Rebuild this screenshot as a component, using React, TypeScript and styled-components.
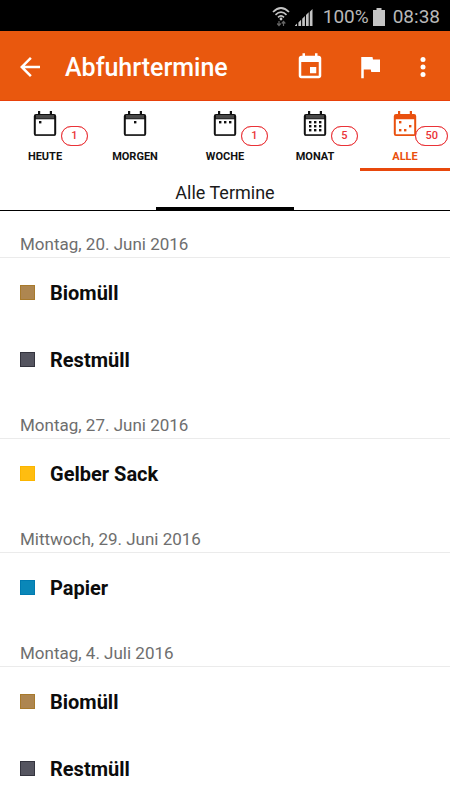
import React from "react";
import styled, { createGlobalStyle } from "styled-components";

const GlobalStyle = createGlobalStyle`
  * { box-sizing: border-box; }
  body { margin: 0; background: #fff; font-family: Roboto, "Liberation Sans", sans-serif; }
  button { font-family: inherit; border: 0; padding: 0; background: none; cursor: pointer; }
`;

const Screen = styled.div`
  height: 100vh;
  display: flex;
  flex-direction: column;
  background: #fff;
`;

const StatusBar = styled.div`
  flex: none;
  height: 31px;
  padding: 2px 10px 0;
  display: flex;
  align-items: center;
  justify-content: flex-end;
  background: #000;
  color: #b8b8b8;
  font-size: 19px;
  line-height: 29px;
`;

const SignalIcons = styled.span`
  display: flex;
  margin-right: 10px;
`;

const BatteryLevel = styled.span`
  display: flex;
  align-items: center;
  gap: 4px;
  margin-right: 8px;
`;

const AppBar = styled.header`
  flex: none;
  height: 70px;
  padding: 2px 12px 0 15px;
  display: flex;
  align-items: center;
  background: #e9580e;
  color: #fff;
  border-bottom: 1px solid #e8410a;
`;

const Actions = styled.div`
  display: flex;
  margin-right: 8px;
`;

const IconButton = styled.button<{ $width: number }>`
  width: ${(p) => p.$width}px;
  height: 48px;
  display: flex;
  align-items: center;
  justify-content: center;
  color: inherit;
`;

const Title = styled.h1`
  flex: 1;
  margin: 0 0 0 20px;
  padding-top: 2px;
  font-size: 25px;
  line-height: 32px;
  font-weight: 500;
`;

const Tabs = styled.nav`
  flex: none;
  height: 70px;
  display: grid;
  grid-template-columns: repeat(5, 1fr);
`;

const Tab = styled.button<{ $active: boolean }>`
  display: flex;
  flex-direction: column;
  align-items: center;
  padding-top: 8px;
  border-bottom: 3px solid ${(p) => (p.$active ? "#e8480c" : "transparent")};
  color: ${(p) => (p.$active ? "#e9500e" : "#111")};
`;

const TabIcon = styled.span`
  position: relative;
  display: flex;
  height: 41px;
`;

const Badge = styled.span`
  position: absolute;
  top: 17px;
  right: -29px;
  min-width: 27px;
  height: 20px;
  padding: 0 9px;
  border: 1px solid #ea3338;
  outline: 1px solid #ea333880;
  outline-offset: -1px;
  border-radius: 10px;
  background: #fff;
  color: #ea3338;
  font-size: 11px;
  line-height: 18px;
  font-weight: 500;
  text-align: center;
`;

const TabLabel = styled.span`
  font-size: 11px;
  line-height: 14px;
  font-weight: 700;
`;

const SubHeader = styled.div`
  flex: none;
  height: 40px;
  display: flex;
  justify-content: center;
  border-bottom: 1px solid #000;
`;

const SubTitle = styled.h2`
  margin: 0;
  padding: 2px 19px 0;
  border-bottom: 3px solid #000;
  color: #1a1a1a;
  font-size: 18px;
  line-height: 40px;
  font-weight: 400;
`;

const List = styled.main`
  flex: 1;
  min-height: 0;
  overflow-y: auto;
  scrollbar-width: none;
`;

const DayHeader = styled.h3`
  margin: 0;
  height: 47px;
  padding: 21px 20px 0;
  border-bottom: 1px solid #ebebeb;
  color: #6e6e6e;
  font-size: 17px;
  line-height: 24px;
  font-weight: 400;
`;

const Items = styled.ul`
  margin: 0;
  padding: 0;
  list-style: none;
`;

const Item = styled.li`
  height: 67px;
  padding: 3px 20px 0;
  display: flex;
  align-items: center;
  gap: 15px;
  color: #0c0c0c;
  font-size: 20px;
  line-height: 24px;
  font-weight: 700;
`;

const Swatch = styled.span<{ $fill: string; $edge: string }>`
  width: 15px;
  height: 15px;
  margin-bottom: 1px;
  background: ${(p) => p.$fill};
  border: 1px solid ${(p) => p.$edge};
`;

type Point = [number, number];

const CalendarIcon = ({ points, active }: { points: Point[]; active: boolean }) => (
  <svg width="28" height="30" viewBox="0 0 28 30" fill="currentColor" aria-hidden="true">
    <path
      fillRule="evenodd"
      d="M7 2h2.200v3h9.600V2H21v3h2a2.200 2.200 0 0 1 2.200 2.200v17.600a2.200 2.200 0 0 1-2.200 2.200H5a2.200 2.200 0 0 1-2.200-2.200V7.200A2.200 2.200 0 0 1 5 5h2zM4.800 10.200v15h18.400v-15z"
    />
    {!active && <path d="M5 6h18v3.500H5zM5 25.500h18v1H5z" fill="#484848" />}
    {points.map(([x, y]) => (
      <rect key={`${x}-${y}`} x={x} y={y} width="2.400" height="2.400" />
    ))}
  </svg>
);

const WifiSignal = () => (
  <svg width="41" height="22" viewBox="0 0 41 22" aria-hidden="true">
    <g fill="none" stroke="#c4c4c4" strokeWidth="1.700">
      <path d="M1 6Q9 -2 17 6" />
      <path d="M3.500 8.800Q9 3.500 14.500 8.800" />
      <path d="M6 11.300Q9 8.500 12 11.300" />
    </g>
    <circle cx="9" cy="13" r="1.400" fill="#c4c4c4" />
    <path d="M7 20v-5M5.200 17.500L7 19.500l1.800-2M11.500 20v-5M9.700 17.500l1.800-2 1.800 2" fill="none" stroke="#666" strokeWidth="1.200" />
    <path d="M23 20h2v-2.500l-2 2zM26.400 20h2.700v-6.200l-2.700 2.700zM30.200 20h2.700V10l-2.700 2.700zM34 20h2.700V6.200L34 8.900zM37.800 20h2.700V3l-2.700 2.700z" fill="#c4c4c4" />
  </svg>
);

const tabs: { label: string; count?: number; points: Point[] }[] = [
  { label: "HEUTE", count: 1, points: [[8, 12]] },
  { label: "MORGEN", points: [[13, 12]] },
  { label: "WOCHE", count: 1, points: [[8, 12], [13, 12], [18, 12]] },
  {
    label: "MONAT",
    count: 5,
    points: [[8, 12], [13, 12], [18, 12], [8, 16], [13, 16], [18, 16], [8, 20], [13, 20], [18, 20]],
  },
  { label: "ALLE", count: 50, points: [[8, 12], [18, 16], [8, 20], [13, 20]] },
];

const bio = { name: "Biomüll", fill: "#ae8650", edge: "#a87a2c" };
const rest = { name: "Restmüll", fill: "#555560", edge: "#34343e" };
const yellow = { name: "Gelber Sack", fill: "#ffbd10", edge: "#fbb500" };
const paper = { name: "Papier", fill: "#0a87b8", edge: "#007ab0" };

const days = [
  { date: "Montag, 20. Juni 2016", items: [bio, rest] },
  { date: "Montag, 27. Juni 2016", items: [yellow] },
  { date: "Mittwoch, 29. Juni 2016", items: [paper] },
  { date: "Montag, 4. Juli 2016", items: [bio, rest] },
];

export default function App() {
  const [active, setActive] = React.useState("ALLE");
  return (
    <Screen>
      <GlobalStyle />
      <StatusBar>
        <SignalIcons>
          <WifiSignal />
        </SignalIcons>
        <BatteryLevel>
          100%
          <svg width="12" height="18" viewBox="0 0 12 18" fill="#c4c4c4" aria-hidden="true">
            <path d="M3.500 0h5v2H12v16H0V2h3.500z" />
          </svg>
        </BatteryLevel>
        <span>08:38</span>
      </StatusBar>
      <AppBar>
        <IconButton $width={30} aria-label="Zurück">
          <svg width="30" height="30" viewBox="0 0 24 24" fill="currentColor">
            <path d="M20 11H7.830l5.590-5.590L12 4l-8 8 8 8 1.410-1.410L7.830 13H20z" />
          </svg>
        </IconButton>
        <Title>Abfuhrtermine</Title>
        <Actions>
          <IconButton $width={60} aria-label="Kalender">
            <svg width="30" height="30" viewBox="0 0 24 24" fill="currentColor">
              <path d="M17 12h-5v5h5zM16 1v2H8V1H6v2H5c-1.110 0-1.990.9-1.990 2L3 19c0 1.100.89 2 2 2h14c1.100 0 2-.9 2-2V5c0-1.100-.9-2-2-2h-1V1zm3 18H5V8h14z" />
            </svg>
          </IconButton>
          <IconButton $width={60} aria-label="Markieren">
            <svg width="30" height="30" viewBox="0 0 24 24" fill="currentColor">
              <path d="M14.400 6L14 4H5v17h2v-7h5.600l.4 2h7V6z" />
            </svg>
          </IconButton>
        </Actions>
        <IconButton $width={30} aria-label="Mehr">
          <svg width="30" height="30" viewBox="0 0 24 24" fill="currentColor">
            <circle cx="12" cy="6" r="2" />
            <circle cx="12" cy="12" r="2" />
            <circle cx="12" cy="18" r="2" />
          </svg>
        </IconButton>
      </AppBar>
      <Tabs>
        {tabs.map((tab) => (
          <Tab
            key={tab.label}
            $active={tab.label === active}
            aria-pressed={tab.label === active}
            onClick={() => setActive(tab.label)}
          >
            <TabIcon>
              <CalendarIcon points={tab.points} active={tab.label === active} />
              {tab.count !== undefined && <Badge>{tab.count}</Badge>}
            </TabIcon>
            <TabLabel>{tab.label}</TabLabel>
          </Tab>
        ))}
      </Tabs>
      <SubHeader>
        <SubTitle>Alle Termine</SubTitle>
      </SubHeader>
      <List>
        {days.map((day) => (
          <section key={day.date}>
            <DayHeader>{day.date}</DayHeader>
            <Items>
              {day.items.map((item) => (
                <Item key={item.name}>
                  <Swatch $fill={item.fill} $edge={item.edge} />
                  {item.name}
                </Item>
              ))}
            </Items>
          </section>
        ))}
      </List>
    </Screen>
  );
}
